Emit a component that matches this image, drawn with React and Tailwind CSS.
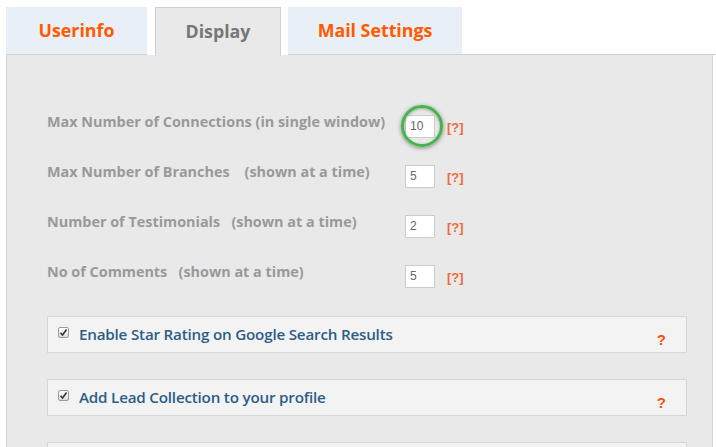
import React from "react";

const labelFont = { fontFamily: '"Open Sans", "DejaVu Sans", sans-serif' };

function Row({ label, sub, gap, value, circled }) {
  return (
    <div className="flex items-start h-[23px]">
      <div className="w-[358px] mt-[-1px] text-[14.4px] leading-[16px] font-bold text-[#999999] whitespace-pre" style={labelFont}>
        {label}
        {gap}
        {sub}
      </div>
      <div className="relative">
        <div className="w-[30px] h-[23px] bg-white border border-[#cccccc] text-[12px] leading-[21px] pl-[4px] text-[#666666]" style={{ fontFamily: '"Liberation Sans", Arial, sans-serif' }}>
          {value}
        </div>
        {circled && (
          <div className="absolute left-[-4px] top-[-10px] w-[42px] h-[42px] rounded-full border-[3px] border-[#45b54a] shadow-[0_1px_4px_rgba(0,0,0,0.45),inset_0_1px_3px_rgba(0,0,0,0.3)]" />
        )}
      </div>
      <div className="ml-[12px] mt-[5px] text-[13px] leading-[15px] font-bold text-[#ee6b3a]" style={{ fontFamily: '"Liberation Sans", Arial, sans-serif' }}>
        [?]
      </div>
    </div>
  );
}

function CheckRow({ label, help }) {
  return (
    <div className="w-[640px] h-[37px] bg-[#f3f3f3] border border-[#d6d6d6] flex items-start relative">
      {label && (
        <>
          <div className="ml-[10px] mt-[10px] w-[11px] h-[11px] rounded-[2px] border border-[#9a9a9a] bg-gradient-to-b from-white to-[#dcdcdc] flex items-center justify-center">
            <svg width="9" height="9" viewBox="0 0 9 9">
              <path d="M1.5 4.8 L3.5 7 L7.6 1.5" fill="none" stroke="#333" strokeWidth="1.6" />
            </svg>
          </div>
          <div className="ml-[10px] mt-[8px] text-[15.2px] leading-[19px] font-semibold text-[#2c5d86] tracking-[-0.2px]" style={labelFont}>
            {label}
          </div>
        </>
      )}
      {help && (
        <div className="absolute right-[20px] top-[14px] text-[15px] leading-[18px] font-bold text-[#ff4e0a]" style={{ fontFamily: '"Liberation Sans", Arial, sans-serif' }}>
          ?
        </div>
      )}
    </div>
  );
}

export default function App() {
  const tabFont = { fontFamily: '"Open Sans", "DejaVu Sans", sans-serif' };
  return (
    <div className="w-[716px] h-[447px] bg-white overflow-hidden">
      <div className="flex items-end pt-[7px] pl-[6px]">
        <div className="w-[141px] h-[48px] bg-[#e8eff6] flex items-center justify-center text-[17.8px] font-bold text-[#ff5a00] border-b border-[#d0d0d0]" style={tabFont}>
          Userinfo
        </div>
        <div className="ml-[8px] w-[126px] h-[49px] bg-[#e9e9e9] border border-b-0 border-[#d0d0d0] flex items-center justify-center text-[17.8px] font-bold text-[#777777] relative z-10 -mb-px pb-[1px]" style={tabFont}>
          Display
        </div>
        <div className="ml-[7px] w-[174px] h-[48px] bg-[#e8eff6] flex items-center justify-center text-[17.8px] font-bold text-[#ff5a00] border-b border-[#d0d0d0]" style={tabFont}>
          Mail Settings
        </div>
        <div className="flex-1 h-[1px] bg-[#d0d0d0]" />
      </div>
      <div className="ml-[6px] w-[707px] h-[400px] bg-[#e9e9e9] border-l border-r border-[#d4d4d4] pt-[60px] pl-[40px]">
        <div className="flex flex-col gap-[27px]">
          <Row label="Max Number of Connections (in single window)" gap="" sub="" value="10" circled />
          <Row label="Max Number of Branches" gap="    " sub="(shown at a time)" value="5" />
          <Row label="Number of Testimonials" gap="   " sub="(shown at a time)" value="2" />
          <Row label="No of Comments" gap="   " sub="(shown at a time)" value="5" />
        </div>
        <div className="mt-[28px] flex flex-col gap-[26px]">
          <CheckRow label="Enable Star Rating on Google Search Results" help />
          <CheckRow label="Add Lead Collection to your profile" help />
          <CheckRow label="" />
        </div>
      </div>
    </div>
  );
}
